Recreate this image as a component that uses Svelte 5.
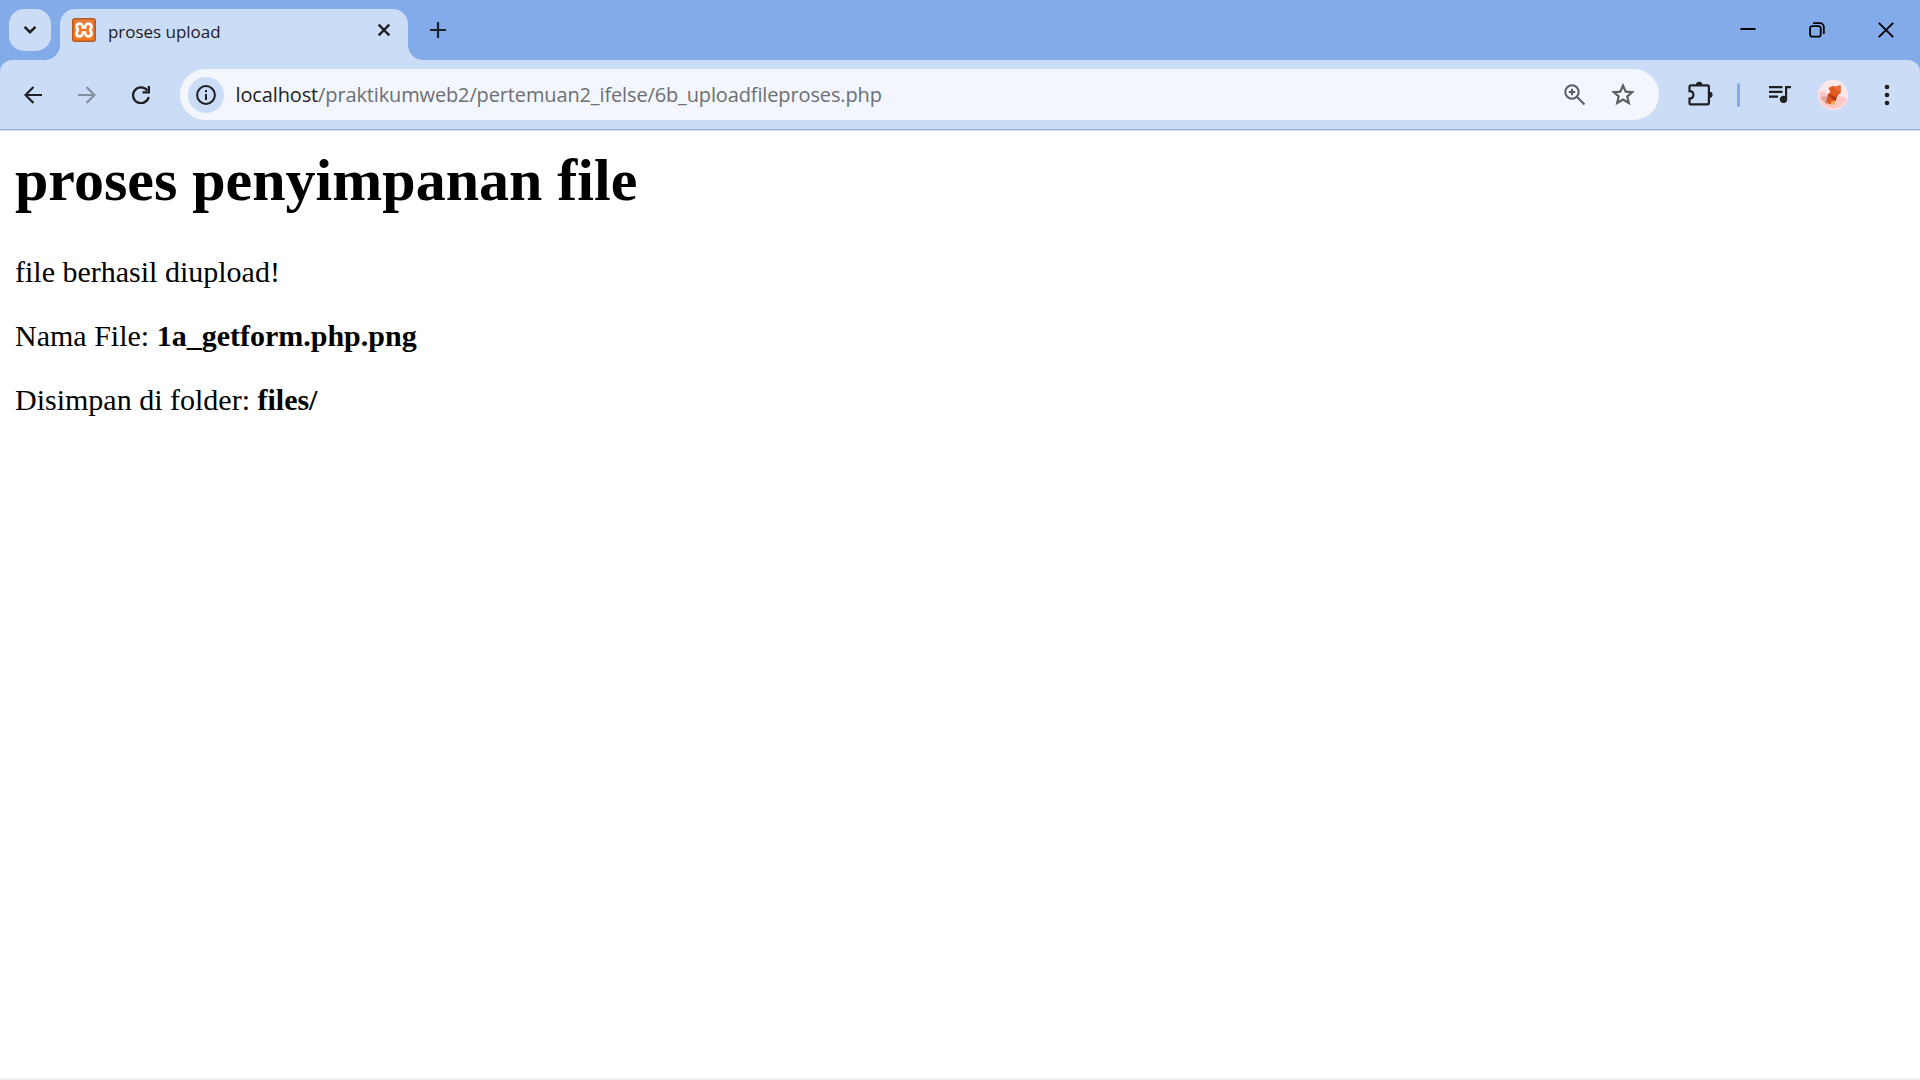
<script>
  const host = 'localhost';
  const path = '/praktikumweb2/pertemuan2_ifelse/6b_uploadfileproses.php';
</script>

<div class="browser">
  <header class="tabstrip">
    <button class="search-tabs" aria-label="Search tabs">
      <svg width="14" height="10" viewBox="0 0 14 10"><path d="M1.6 1.8 7 7.2l5.4-5.4" fill="none" stroke="#1f2023" stroke-width="2.5" /></svg>
    </button>
    <div class="tab">
      <svg class="favicon" width="24" height="24" viewBox="0 0 24 24">
        <defs>
          <linearGradient id="fav" x1="0" y1="0" x2="0" y2="1">
            <stop offset="0" stop-color="#d9864a" />
            <stop offset=".2" stop-color="#ee7324" />
            <stop offset="1" stop-color="#f27a22" />
          </linearGradient>
        </defs>
        <rect x=".75" y=".75" width="22.5" height="22.5" rx="2" fill="url(#fav)" stroke="#b85a20" stroke-width="1.5" />
        <g fill="#fff">
          <circle cx="7.500" cy="8.700" r="4.400" /><circle cx="16.500" cy="8.700" r="4.400" />
          <circle cx="7.500" cy="15.300" r="4.400" /><circle cx="16.500" cy="15.300" r="4.400" />
          <path d="M8 8h8v8H8z" />
        </g>
        <g fill="#f0762a">
          <circle cx="7.700" cy="8.700" r="1.700" /><circle cx="16.300" cy="8.700" r="1.700" />
          <circle cx="7.700" cy="15.300" r="1.700" /><circle cx="16.300" cy="15.300" r="1.700" />
        </g>
        <path d="M8.300 9v6M15.700 9v6M8.300 12h7.400" stroke="#f0762a" stroke-width="2.400" />
      </svg>
      <span class="title">proses upload</span>
      <button class="close-tab" aria-label="Close tab">
        <svg width="14" height="14" viewBox="0 0 14 14"><path d="m1.700 1.700 10.600 10.600m0-10.600L1.700 12.300" stroke="#1f2023" stroke-width="2.400" /></svg>
      </button>
    </div>
    <button class="new-tab" aria-label="New tab">
      <svg width="16" height="16" viewBox="0 0 16 16"><path d="M8 0v16M0 8h16" stroke="#1f2023" stroke-width="2.200" /></svg>
    </button>
    <div class="window-controls">
      <button aria-label="Minimize"><svg width="16" height="16" viewBox="0 0 16 16"><path d="M.5 7h15" stroke="#000" stroke-width="2" /></svg></button>
      <button aria-label="Restore">
        <svg width="16" height="16" viewBox="0 0 16 16" fill="none" stroke="#000" stroke-width="1.800">
          <rect x="1.100" y="4.100" width="10.600" height="10.600" rx="2.200" />
          <path d="M4 1.200h7a3.800 3.800 0 0 1 3.800 3.800v7" />
        </svg>
      </button>
      <button aria-label="Close"><svg width="16" height="16" viewBox="0 0 16 16"><path d="m.8.8 14.400 14.400m0-14.400L.8 15.200" stroke="#000" stroke-width="1.900" /></svg></button>
    </div>
  </header>

  <nav class="toolbar">
    <div class="nav-buttons">
      <button aria-label="Back"><svg width="18" height="18" viewBox="0 0 18 18"><path d="M18 9H2M9.500 1 1.500 9l8 8" fill="none" stroke="#1f2023" stroke-width="2.200" /></svg></button>
      <button aria-label="Forward"><svg width="18" height="18" viewBox="0 0 18 18"><path d="M0 9h16M8.500 1l8 8-8 8" fill="none" stroke="#82909f" stroke-width="2.200" /></svg></button>
      <button aria-label="Reload">
        <svg width="18" height="18" viewBox="0 0 18 18">
          <path d="M15.300 4.500A7.900 7.900 0 1 0 16.700 11" fill="none" stroke="#1f2023" stroke-width="2.300" />
          <path d="M18 0v7.500h-7.500V5.300h5.200V0Z" fill="#1f2023" />
        </svg>
      </button>
    </div>
    <div class="omnibox">
      <span class="site-info">
        <svg width="20" height="20" viewBox="0 0 20 20">
          <circle cx="10" cy="10" r="8.900" fill="none" stroke="#1f2023" stroke-width="2" />
          <path d="M10 9v6M10 5v2.200" stroke="#1f2023" stroke-width="2" />
        </svg>
      </span>
      <span class="url"><span class="host">{host}</span>{path}</span>
      <svg class="zoom-icon" width="22" height="22" viewBox="0 0 22 22" fill="none" stroke="#5a5d61" stroke-width="2">
        <circle cx="8" cy="8" r="6.700" />
        <path d="m12.800 12.800 7.700 7.700M8 4.800v6.400M4.800 8h6.400" />
      </svg>
      <svg class="star-icon" width="24" height="23" viewBox="0 0 24 23">
        <path d="m12 2.600 2.700 6 6.500.6-4.900 4.300 1.500 6.400-5.800-3.400-5.800 3.400 1.500-6.400-4.900-4.300 6.500-.6Z" fill="none" stroke="#5a5d61" stroke-width="2.200" />
      </svg>
    </div>
    <svg class="puzzle" width="25" height="25" viewBox="0 0 25 25">
      <path d="M2.700 4.400h16.600a1.600 1.600 0 0 1 1.600 1.600v15.700a1.600 1.600 0 0 1-1.600 1.600H2.900a1.400 1.400 0 0 1-1.400-1.400v-4.300c2.300 0 3.900-1.500 3.900-3.700s-1.600-3.700-3.900-3.700V5.700a1.300 1.300 0 0 1 1.200-1.300Z" fill="none" stroke="#1f2023" stroke-width="2.200" />
      <path d="M8 4a3.200 3.200 0 0 1 6.400 0ZM21.500 10.700a3.100 3.100 0 0 1 0 6.200Z" fill="#1f2023" />
    </svg>
    <span class="divider"></span>
    <svg class="media" width="24" height="17" viewBox="0 0 24 17">
      <path d="M1 1.200h13.500M1 5.900h13.500M1 10.600h9" stroke="#1f2023" stroke-width="2.200" />
      <path d="M17 0h6v2.300h-3.800v11A3.700 3.700 0 1 1 17 10Z" fill="#1f2023" />
    </svg>
    <svg class="avatar" width="30" height="30" viewBox="0 0 30 30">
      <defs><clipPath id="disc"><circle cx="15" cy="15" r="15" /></clipPath></defs>
      <g clip-path="url(#disc)">
        <path fill="#fce7e9" d="M0 0h30v30H0z" />
        <path fill="#ffc9c5" d="m0 10 12 4 18 4v12H0z" />
        <path fill="#dca7a3" d="m2 17 7-1 3 8-4 0z" />
        <path fill="#e2581f" d="M10.500 8 14.500 6l4 .5 4-1.500.3 7.500-4.300 4.500-1.500 5-4 2.500-5-2 2-8.500 2.500-2Z" />
        <path fill="#f0672a" d="m14 7 4.500 0 4-2-.5 7Z" />
        <path fill="#a83711" d="m10.500 14 7 3 1.500-2-1 6-3-1.500-4.500-4Z" />
        <path fill="#e4b16b" d="m13 22 4-1.500v4.500l-4-.500Z" />
      </g>
      <circle cx="15" cy="15" r="14.500" fill="none" stroke="#fbe9ef" stroke-width="1" />
    </svg>
    <svg class="menu" width="6" height="22" viewBox="0 0 6 22" fill="#1f2023">
      <circle cx="3" cy="3" r="2.300" /><circle cx="3" cy="11" r="2.300" /><circle cx="3" cy="19" r="2.300" />
    </svg>
  </nav>

  <main class="page">
    <h1>proses penyimpanan file</h1>
    <p>file berhasil diupload!</p>
    <p>Nama File: <b>1a_getform.php.png</b></p>
    <p>Disimpan di folder: <b>files/</b></p>
  </main>
  <div class="window-edge"></div>
</div>

<style>
  :global(body) { margin: 0; background: #fff; }
  .browser {
    width: 1920px;
    height: 1080px;
    display: flex;
    flex-direction: column;
    overflow: hidden;
    background: #fff;
  }
  button {
    border: 0;
    padding: 0;
    margin: 0;
    background: none;
    display: flex;
    align-items: center;
    justify-content: center;
  }
  svg { display: block; flex: none; }

  .tabstrip {
    height: 60px;
    flex: none;
    display: flex;
    background: #84abe9;
  }
  .search-tabs {
    width: 42px;
    height: 42px;
    margin: 9px 9px 0;
    border-radius: 15px;
    background: #cbdcf6;
  }
  .tab {
    position: relative;
    box-sizing: border-box;
    width: 348px;
    height: 51px;
    margin-top: 9px;
    padding: 0 17px 9px 12px;
    display: flex;
    align-items: center;
    background: #cbdcf6;
    border-radius: 15px 15px 0 0;
  }
  /* Concave feet joining the tab to the toolbar */
  .tab::before,
  .tab::after {
    content: '';
    position: absolute;
    bottom: 0;
    width: 15px;
    height: 15px;
  }
  .tab::before {
    left: -15px;
    background: radial-gradient(circle at 0 0, transparent 14.5px, #cbdcf6 15.300px);
  }
  .tab::after {
    right: -15px;
    background: radial-gradient(circle at 100% 0, transparent 14.5px, #cbdcf6 15.300px);
  }
  .title {
    flex: 1;
    margin-left: 12px;
    font: 17px/24px 'Open Sans', sans-serif;
    letter-spacing: -0.03px;
    color: #1f2023;
    padding-top: 3px;
  }
  .new-tab { width: 16px; height: 16px; margin: 22px 0 0 22px; }
  .window-controls { margin-left: auto; display: flex; }
  .window-controls button { width: 69px; height: 59px; }

  /* The shadow fills the area outside the rounded top corners with the tab strip colour */
  .toolbar {
    box-sizing: border-box;
    height: 71px;
    flex: none;
    display: flex;
    align-items: center;
    padding: 0 30px 1px 24px;
    border-bottom: 1px solid #cbdcf6;
    background: linear-gradient(#9db2d6, #9db2d6) left bottom / 100% 1px no-repeat padding-box, #cbdcf6;
    border-radius: 12px 12px 0 0;
    box-shadow: 0 -12px 0 12px #84abe9;
    clip-path: inset(0);
  }
  .nav-buttons { display: flex; gap: 36px; }
  .omnibox {
    box-sizing: border-box;
    width: 1479px;
    height: 51px;
    margin-left: 30px;
    padding: 0 24px 0 8px;
    display: flex;
    align-items: center;
    border-radius: 26px;
    background: #f3f7fd;
  }
  .site-info {
    width: 36px;
    height: 36px;
    border-radius: 50%;
    display: flex;
    align-items: center;
    justify-content: center;
    background: #cbdcf6;
  }
  .url {
    flex: 1;
    margin-left: 11.5px;
    font: 20px/28px 'Open Sans', sans-serif;
    letter-spacing: -0.135px;
    color: #6c6f74;
    white-space: nowrap;
  }
  .host { color: #1f2023; }
  .star-icon { margin-left: 25px; }
  .puzzle { margin-left: 29px; margin-top: -3px; }
  .divider { width: 3px; height: 24px; margin-left: 24px; border-radius: 2px; background: #84abe9; }
  .media { margin-left: 28px; margin-top: -1px; }
  .avatar { margin-left: 26px; }
  .menu { margin-left: 36px; }

  .page {
    flex: 1;
    padding: 15px 15px 0;
    font: 30px/34px 'Liberation Serif', 'Times New Roman', serif;
    color: #000;
  }
  h1 { margin: 0 0 40px; font-size: 60px; line-height: 69px; font-weight: bold; }
  p { margin: 0 0 30px; }
  .window-edge { height: 2px; flex: none; background: #edf2f8; }
</style>
